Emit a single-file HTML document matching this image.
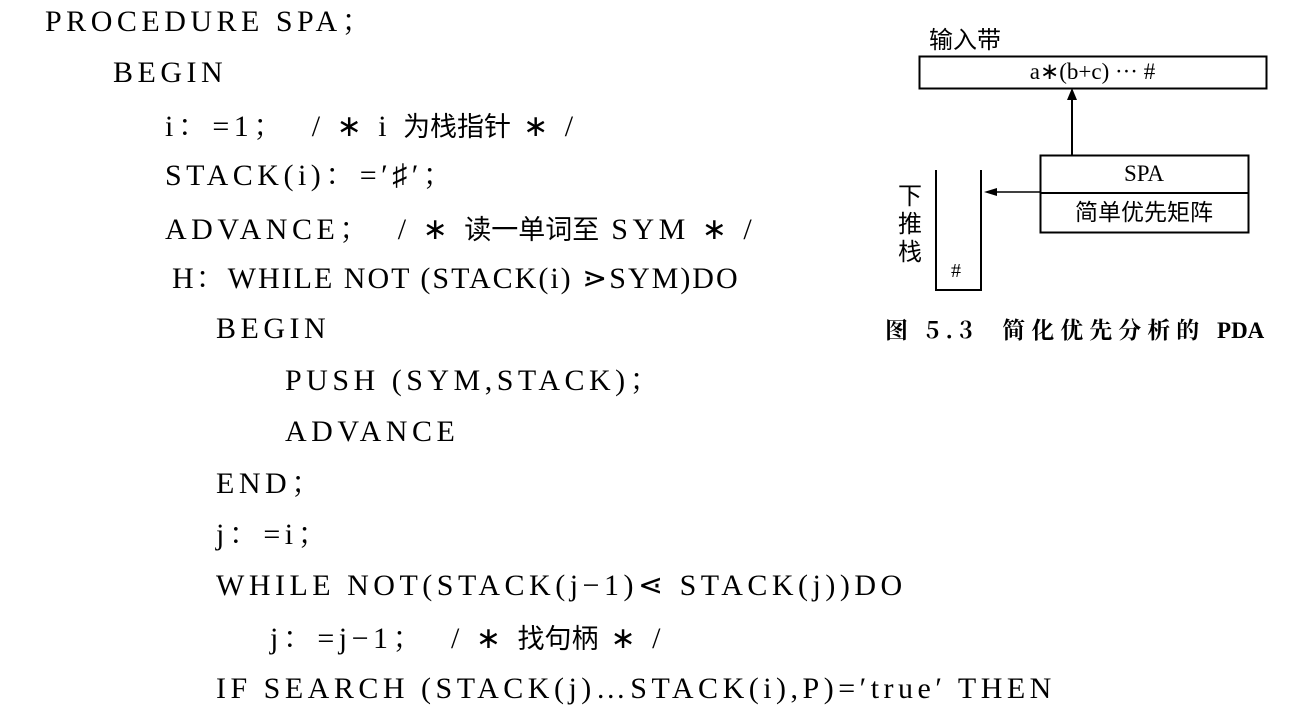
<!DOCTYPE html>
<html><head><meta charset="utf-8"><style>
body{margin:0;width:1303px;height:717px;background:#fff;position:relative;overflow:hidden;font-family:"Liberation Serif","Noto Serif CJK SC",serif;color:#000}
.l{position:absolute;font-size:30px;line-height:34px;white-space:pre;letter-spacing:4.5px}
.d{position:absolute;font-size:22px;line-height:26px;white-space:pre}
.c{font-family:"Noto Sans CJK SC","WenQuanYi Zen Hei",sans-serif;font-size:27px;letter-spacing:0}
</style></head><body>
<div class="l" style="left:45px;top:5px">PROCEDURE SPA；</div>
<div class="l" style="left:113px;top:56px">BEGIN</div>
<div class="l" style="left:165px;top:108px">i：=1；  / ∗ i <span class="c">为栈指针</span> ∗ /</div>
<div class="l" style="left:165px;top:159px">STACK(i)：=′♯′；</div>
<div class="l" style="left:165px;top:211px">ADVANCE；  / ∗ <span class="c">读一单词至</span> SYM ∗ /</div>
<div class="l" style="left:172px;top:262px;letter-spacing:2px">H：WHILE NOT (STACK(i) ⋗SYM)DO</div>
<div class="l" style="left:216px;top:312px">BEGIN</div>
<div class="l" style="left:285px;top:364px">PUSH (SYM,STACK)；</div>
<div class="l" style="left:285px;top:415px">ADVANCE</div>
<div class="l" style="left:216px;top:467px">END；</div>
<div class="l" style="left:216px;top:518px">j：=i；</div>
<div class="l" style="left:216px;top:569px">WHILE NOT(STACK(j−1)⋖ STACK(j))DO</div>
<div class="l" style="left:270px;top:620px">j：=j−1；  / ∗ <span class="c">找句柄</span> ∗ /</div>
<div class="l" style="left:216px;top:672px">IF SEARCH (STACK(j)…STACK(i),P)=′true′ THEN</div>

<svg style="position:absolute;left:0;top:0" width="1303" height="717">
<rect x="919.5" y="56.5" width="347" height="32" fill="none" stroke="#000" stroke-width="2"/>
<line x1="1072" y1="155" x2="1072" y2="98" stroke="#000" stroke-width="2"/>
<polygon points="1072,88 1067,100 1077,100" fill="#000"/>
<rect x="1040.5" y="155.5" width="208" height="77" fill="none" stroke="#000" stroke-width="2"/>
<line x1="1040" y1="193" x2="1248" y2="193" stroke="#000" stroke-width="2"/>
<polyline points="936,170 936,290 981,290 981,170" fill="none" stroke="#000" stroke-width="2"/>
<line x1="1040" y1="192" x2="994" y2="192" stroke="#000" stroke-width="1.5"/>
<polygon points="984,192 997,188 997,196" fill="#000"/>
</svg>
<div class="d" style="left:929px;top:25px;font-size:24px;font-family:'Noto Sans CJK SC',sans-serif">输入带</div>
<div class="d" style="left:919px;top:59px;width:347px;text-align:center;font-size:23px">a∗(b+c) ··· #</div>
<div class="d" style="left:1040px;top:161px;width:208px;text-align:center;font-size:23px">SPA</div>
<div class="d" style="left:1040px;top:197px;width:208px;text-align:center;font-size:23px;font-family:'Noto Sans CJK SC',sans-serif">简单优先矩阵</div>
<div class="d" style="left:898px;top:180px;width:26px;font-size:24px;line-height:28px;font-family:'Noto Sans CJK SC',sans-serif">下<br>推<br>栈</div>
<div class="d" style="left:951px;top:258px;font-size:20px">#</div>
<div class="d" style="left:885px;top:316px;font-size:23px;font-weight:bold;font-family:'Noto Serif CJK SC',serif;letter-spacing:6px">图 5.3  简化优先分析的 <span style="font-family:'Liberation Serif';letter-spacing:0">PDA</span></div>
</body></html>
